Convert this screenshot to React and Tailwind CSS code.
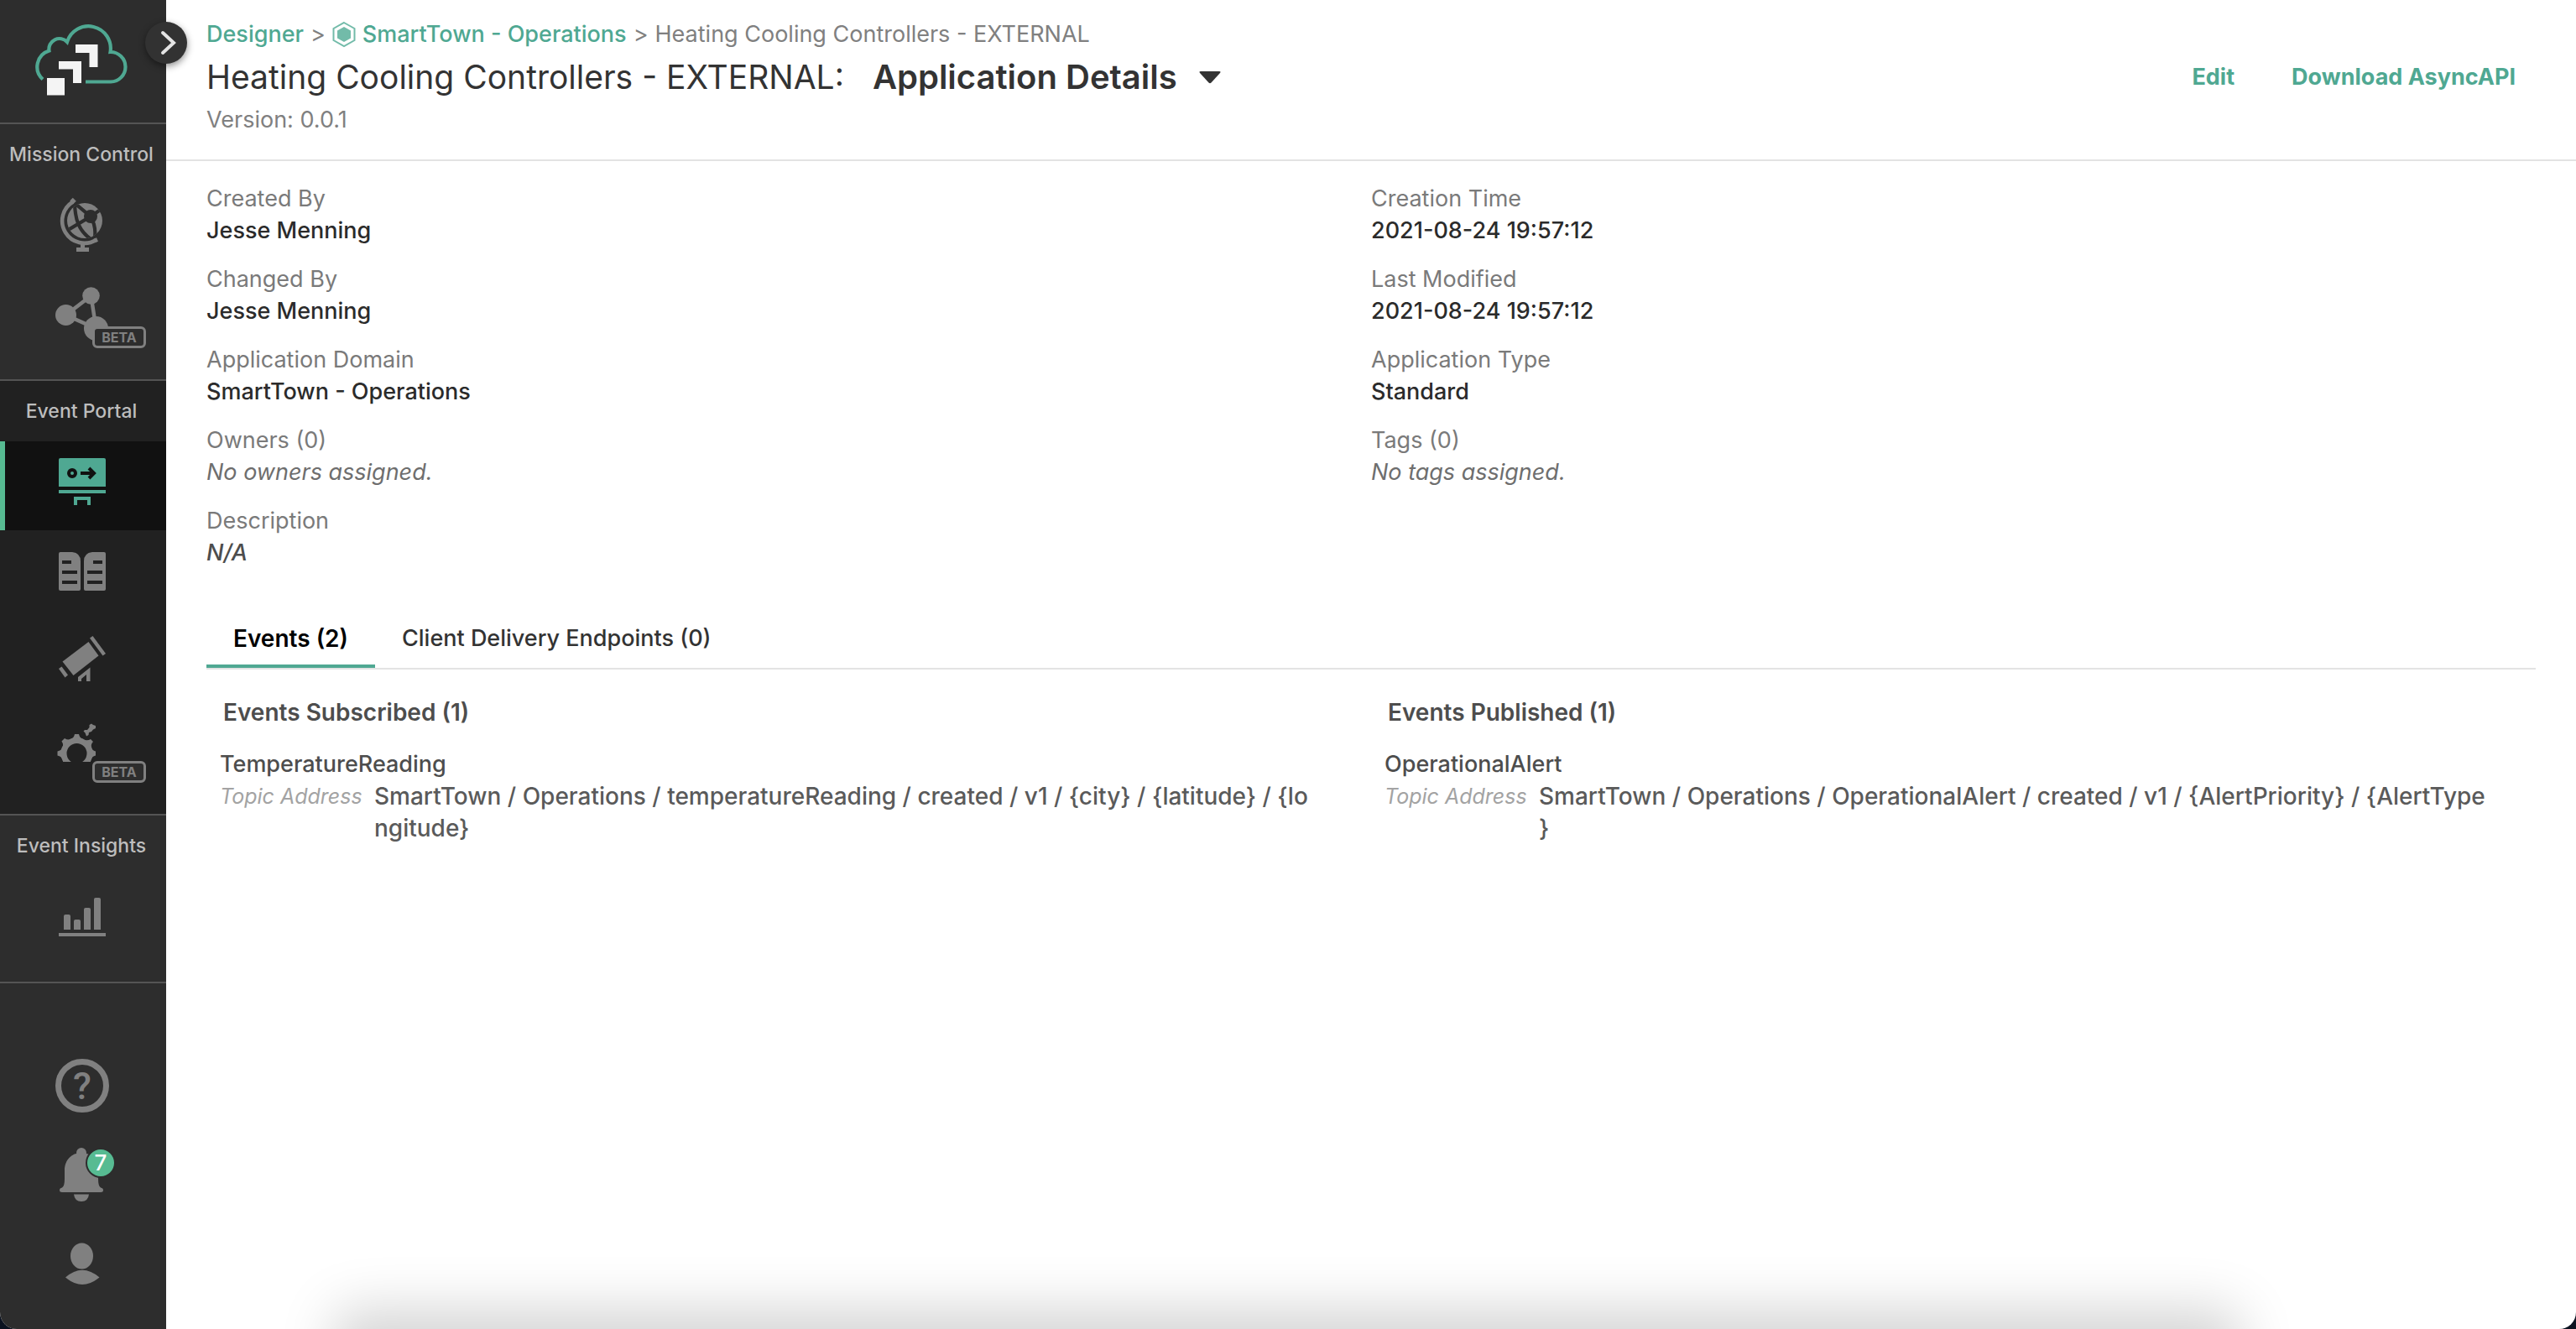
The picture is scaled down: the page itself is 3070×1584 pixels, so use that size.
import React from "react";

function Icon({ top, children, className = "text-[#808080]" }) {
  return (
    <svg viewBox={`67 ${top} 64 64`} className={`h-16 w-16 overflow-visible ${className}`} fill="currentColor" aria-hidden="true">
      {children}
    </svg>
  );
}

function Logo() {
  return (
    <svg viewBox="40 28 114 88" className="h-[88px] w-[114px]" aria-hidden="true">
      <path
        d="M51 94.500A20 20 0 0 1 58.500 60.500A12.500 12.500 0 0 1 80 50A26.500 26.500 0 0 1 131.500 62A17.700 17.700 0 0 1 132 97.500H102"
        fill="none"
        stroke="#4fa892"
        strokeWidth="4.2"
      />
      <g fill="#f4f4f4">
        <rect x="56" y="93" width="21" height="20.500" />
        <path d="M70 73H97V99H87V82.500H70Z" />
        <path d="M90 53H116.500V80H106.500V63H90Z" />
      </g>
    </svg>
  );
}

function GlobeIcon() {
  return (
    <Icon top={240}>
      <clipPath id="globe-clip">
        <circle cx="101" cy="263" r="21" />
      </clipPath>
      <circle cx="101" cy="263" r="21" />
      <g clipPath="url(#globe-clip)" fill="none" stroke="#2d2d2d" strokeWidth="4.200">
        <path d="M89 240C89 262 94 276 111 287" />
        <path d="M78 276L108 258L124 247" />
        <path d="M90 243L108 258Q116 272 112 288" />
      </g>
      <circle cx="108" cy="258" r="8" fill="#2d2d2d" />
      <path d="M87 240.500A26.500 26.500 0 1 0 114.500 286" fill="none" stroke="currentColor" strokeWidth="4.600" />
      <path d="M85 237.500L89 241.500M112.500 287L116 285.500" stroke="currentColor" strokeWidth="5" />
      <rect x="96" y="289" width="5" height="7" />
      <rect x="91" y="295" width="15" height="5" />
    </Icon>
  );
}

function MeshIcon() {
  return (
    <Icon top={346}>
      <path d="M108.500 352.500L78.500 375.500L114.500 391.500Z" fill="none" stroke="currentColor" strokeWidth="4.500" />
      <circle cx="108.500" cy="352.500" r="10.300" />
      <circle cx="78.500" cy="375.500" r="12.500" />
      <circle cx="114.500" cy="391.500" r="14.500" />
    </Icon>
  );
}

function DesignerIcon() {
  return (
    <Icon top={546} className="text-[#4fa892]">
      <path d="M72 546H124Q126 546 126 548V580H70V548Q70 546 72 546Z" />
      <rect x="70" y="584" width="56" height="4" />
      <path d="M90 602V594H106V602" fill="none" stroke="currentColor" strokeWidth="4" />
      <g fill="none" stroke="#111111" strokeWidth="4">
        <circle cx="86" cy="564" r="4" />
        <path d="M96 564H110M106 558L112 564L106 570" />
      </g>
    </Icon>
  );
}

function CatalogIcon() {
  return (
    <Icon top={652}>
      <path d="M72 658H86Q96 659 96 669V702Q96 704 94 704H72Q70 704 70 702V660Q70 658 72 658Z" />
      <path d="M124 658H110Q100 659 100 669V702Q100 704 102 704H124Q126 704 126 702V660Q126 658 124 658Z" />
      <path
        d="M74 670H85M74 682H92M74 694H92M111 670H122M104 682H122M104 694H122"
        stroke="#212121"
        strokeWidth="4"
      />
    </Icon>
  );
}

function TelescopeIcon() {
  return (
    <Icon top={758}>
      <path d="M74.500 788.500L105.500 765L117.500 781.500L87.500 805Z" />
      <path d="M107 760.500L110.500 758L126 779L122.500 781.500Z" />
      <path d="M70 797L73.500 794.500L81 804.500L77.500 807.500Z" />
      <path d="M93 812V807L107.500 795.500V812H103V804L97 809V812Z" />
    </Icon>
  );
}

function GearIcon() {
  const teeth = [0, 45, 90, 135, 180, 225, 270, 315];
  return (
    <Icon top={864}>
      <clipPath id="gear-clip">
        <rect x="60" y="850" width="54" height="58" />
      </clipPath>
      <g clipPath="url(#gear-clip)">
        <circle cx="91.500" cy="898" r="15.500" fill="none" stroke="currentColor" strokeWidth="7" />
        {teeth
          .filter((a) => a !== 45)
          .map((a) => (
            <path key={a} d="M84 881Q88 880 89 875H94Q95 880 99 881Z" transform={`rotate(${a} 91.500 898)`} />
          ))}
        <path d="M101 882Q105 883 108 881L111 884Q108 887 109 891Z" />
        <path d="M99.500 871.500L101 870L104 870L106.500 867V864L109 862.500L111 864L114 865V868L111 869.500L109 872L106 873L105.500 876L103 877.500L101.500 873.500Z" />
      </g>
    </Icon>
  );
}

function InsightsIcon() {
  return (
    <Icon top={1064}>
      <path d="M76 1108V1092Q76 1090 78 1090H82Q84 1090 84 1092V1108Z" />
      <path d="M88 1108V1098Q88 1096 90 1096H94Q96 1096 96 1098V1108Z" />
      <path d="M100 1108V1084Q100 1082 102 1082H106Q108 1082 108 1084V1108Z" />
      <path d="M112 1108V1072Q112 1070 114 1070H118Q120 1070 120 1072V1108Z" />
      <rect x="70" y="1112" width="56" height="4" />
    </Icon>
  );
}

function HelpIcon() {
  return (
    <Icon top={1262}>
      <circle cx="98" cy="1294" r="28.500" fill="none" stroke="currentColor" strokeWidth="7" />
      <text x="98" y="1310" textAnchor="middle" fontSize="45" fontWeight="500" fontFamily="Roboto, sans-serif">
        ?
      </text>
    </Icon>
  );
}

function BellIcon() {
  return (
    <Icon top={1368}>
      <circle cx="97" cy="1374" r="6" />
      <path d="M97 1374C85 1374 77 1383 77 1395V1405Q77 1414 74 1415.500Q71 1416 71 1418.500Q71 1421 74 1421H120Q123 1421 123 1418.500Q123 1416 120 1415.500Q117 1414 117 1405V1395C117 1383 109 1374 97 1374Z" />
      <path d="M88 1423.500H106Q105 1432 97 1432Q89 1432 88 1423.500Z" />
    </Icon>
  );
}

function UserIcon() {
  return (
    <Icon top={1474}>
      <ellipse cx="97.500" cy="1497" rx="13.500" ry="15.500" />
      <path d="M78 1522.500Q98 1505 118.500 1522.500Q98 1539.500 78 1522.500Z" />
    </Icon>
  );
}

function RailItem({ label, active, children }) {
  return (
    <li>
      <button
        type="button"
        aria-label={label}
        className={`relative flex h-[106px] w-full justify-center pt-5 ${active ? "bg-[#111111]" : ""}`}
      >
        {active && <span className="absolute inset-y-0 left-0 w-[6px] bg-[#57bb92]" />}
        {children}
      </button>
    </li>
  );
}

function Beta() {
  return (
    <span className="absolute left-[110px] top-[63px] flex h-[26px] w-16 items-center justify-center rounded-md border-[3px] border-[#808080] bg-[#2d2d2d] text-[16px] leading-none font-bold text-[#808080]">
      BETA
    </span>
  );
}

function RailSection({ title, className = "", children }) {
  return (
    <section className={`border-t-2 border-[#545454] pb-5 ${className}`}>
      <h2 className="pr-1 text-center text-[23px] leading-[72px] text-[#bdbdbd]">{title}</h2>
      <ul>{children}</ul>
    </section>
  );
}

function Rail() {
  return (
    <nav aria-label="Main" className="relative z-10 flex w-[198px] shrink-0 flex-col bg-[#2d2d2d]">
      <div className="flex h-[146px] justify-center pt-7 pr-1">
        <Logo />
      </div>
      <button
        type="button"
        aria-label="Expand navigation"
        className="absolute top-[26px] -right-[25px] flex size-[50px] items-center justify-center rounded-full bg-[#323232] shadow-[0_3px_8px_rgba(0,0,0,0.45)]"
      >
        <svg viewBox="0 0 50 50" className="size-[50px]" fill="none" stroke="#e4e4e4" strokeWidth="4" strokeLinecap="round" aria-hidden="true">
          <path d="M21 13L34 25L21 37" />
        </svg>
      </button>
      <RailSection title="Mission Control">
        <RailItem label="Cluster Manager">
          <GlobeIcon />
        </RailItem>
        <RailItem label="Mesh Manager">
          <MeshIcon />
          <Beta />
        </RailItem>
      </RailSection>
      <RailSection title="Event Portal" className="bg-[#212121]">
        <RailItem label="Designer" active>
          <DesignerIcon />
        </RailItem>
        <RailItem label="Catalog">
          <CatalogIcon />
        </RailItem>
        <RailItem label="Discovery">
          <TelescopeIcon />
        </RailItem>
        <RailItem label="Runtime Event Manager">
          <GearIcon />
          <Beta />
        </RailItem>
      </RailSection>
      <RailSection title="Event Insights" className="border-b-2">
        <RailItem label="Insights">
          <InsightsIcon />
        </RailItem>
      </RailSection>
      <ul className="mt-auto pb-6">
        <RailItem label="Help">
          <HelpIcon />
        </RailItem>
        <RailItem label="Notifications">
          <BellIcon />
          <span className="absolute left-[104px] top-[22px] flex size-8 items-center justify-center rounded-full bg-[#57bb92] text-[26px] leading-none text-white ring-2 ring-[#2d2d2d]">
            7
          </span>
        </RailItem>
        <RailItem label="Account">
          <UserIcon />
        </RailItem>
      </ul>
    </nav>
  );
}

function Header() {
  return (
    <header className="flex items-center justify-between border-b-2 border-[#e3e3e3] pt-[22px] pr-[72px] pb-7 pl-12">
      <div>
        <nav aria-label="Breadcrumb" className="flex items-center gap-2 leading-[38px] font-normal text-[#808080]">
          <a href="#designer" className="font-medium text-[#4fa892]">Designer</a>
          <span>&gt;</span>
          <a href="#operations" className="flex items-center gap-2 font-medium text-[#4fa892]">
            <svg viewBox="0 0 28 32" className="h-8 w-7" aria-hidden="true">
              <path d="M14 2L26.500 9V23L14 30L1.500 23V9Z" fill="none" stroke="#72bba9" strokeWidth="2" />
              <path d="M14 7L22 11.500V20.500L14 25L6 20.500V11.500Z" fill="#72bba9" />
            </svg>
            SmartTown - Operations
          </a>
          <span>&gt;</span>
          <span>Heating Cooling Controllers - EXTERNAL</span>
        </nav>
        <div className="flex items-center gap-[34px] leading-[64px] text-[#333333]">
          <h1 className="text-[39px] font-normal">Heating Cooling Controllers - EXTERNAL:</h1>
          <button type="button" aria-haspopup="menu" className="flex items-center gap-[26px] text-[40px] font-semibold">
            Application Details
            <svg viewBox="0 0 26 16" className="h-4 w-[26px]" fill="#333333" aria-hidden="true">
              <path d="M2 1H24Q26.500 1 25 3L14.500 14.500Q13 16 11.500 14.500L1 3Q-.5 1 2 1Z" />
            </svg>
          </button>
        </div>
        <p className="leading-[38px] font-normal text-[#808080]">Version: 0.0.1</p>
      </div>
      <div className="flex gap-[68px] leading-[38px] font-bold text-[#4fa892]">
        <button type="button">Edit</button>
        <button type="button">Download AsyncAPI</button>
      </div>
    </header>
  );
}

const details = [
  ["Created By", "Jesse Menning"],
  ["Creation Time", "2021-08-24 19:57:12"],
  ["Changed By", "Jesse Menning"],
  ["Last Modified", "2021-08-24 19:57:12"],
  ["Application Domain", "SmartTown - Operations"],
  ["Application Type", "Standard"],
  ["Owners (0)", "No owners assigned.", "italic font-normal text-[#6e6e6e]"],
  ["Tags (0)", "No tags assigned.", "italic font-normal text-[#6e6e6e]"],
  ["Description", "N/A", "italic text-[#4d4d4d]"],
];

/* Topics are one unbroken run; `tail` is the part that may wrap onto the next line. */
const eventLists = [
  {
    title: "Events Subscribed (1)",
    name: "TemperatureReading",
    topic: ["SmartTown", "Operations", "temperatureReading", "created", "v1", "{city}", "{latitude}", "{lo"],
    tail: "ngitude}",
  },
  {
    title: "Events Published (1)",
    name: "OperationalAlert",
    topic: ["SmartTown", "Operations", "OperationalAlert", "created", "v1", "{AlertPriority}", "{AlertType"],
    tail: "}",
  },
];

function EventList({ title, name, topic, tail }) {
  return (
    <section>
      <h2 className="pl-5 text-[28px] leading-[38px] font-semibold text-[#4d4d4d]">{title}</h2>
      <div className="mt-6 pr-[56px] pl-4 leading-[38px]">
        <h3 className="text-[#4d4d4d]">{name}</h3>
        <dl className="flex">
          <dt className="w-[184px] shrink-0 text-[25px] font-normal text-[#a3a3a3] italic">Topic Address</dt>
          <dd className="min-w-0 text-[28px] wrap-anywhere text-[#5a5a5a]">
            {topic.join("\u00a0/\u00a0")}
            <wbr />
            {tail}
          </dd>
        </dl>
      </div>
    </section>
  );
}

export default function App() {
  return (
    <div className="min-h-screen bg-[#0b1220]">
      <div className="flex min-h-screen overflow-hidden rounded-b-[20px] bg-white font-[Inter,sans-serif] text-[27px] font-medium">
        <Rail />
        <main className="relative min-w-0 flex-1 overflow-hidden">
          <Header />
          <div className="px-12 pt-[26px]">
            <dl className="grid grid-cols-2 gap-y-5 leading-[38px]">
              {details.map(([label, value, style]) => (
                <div key={label}>
                  <dt className="font-normal text-[#7a7a7a]">{label}</dt>
                  <dd className={style || "text-[#2b2b2b]"}>{value}</dd>
                </div>
              ))}
            </dl>
            <div role="tablist" className="mt-[47px] flex border-b-2 border-[#e3e3e3] leading-[38px]">
              <button type="button" role="tab" aria-selected="true" className="border-b-4 border-[#4fa892] px-8 pt-[17px] pb-3 text-[28px] font-semibold text-black">
                Events (2)
              </button>
              <button type="button" role="tab" aria-selected="false" className="border-b-4 border-transparent px-8 pt-[17px] pb-3 text-[#333333]">
                Client Delivery Endpoints (0)
              </button>
            </div>
            <div role="tabpanel" className="grid grid-cols-2 pt-8">
              {eventLists.map((list) => (
                <EventList key={list.title} {...list} />
              ))}
            </div>
          </div>
          <div className="pointer-events-none absolute top-full right-[400px] left-[200px] h-32 rounded-[20px] shadow-[0_-24px_64px_rgba(0,0,0,0.17)]" />
        </main>
      </div>
    </div>
  );
}
